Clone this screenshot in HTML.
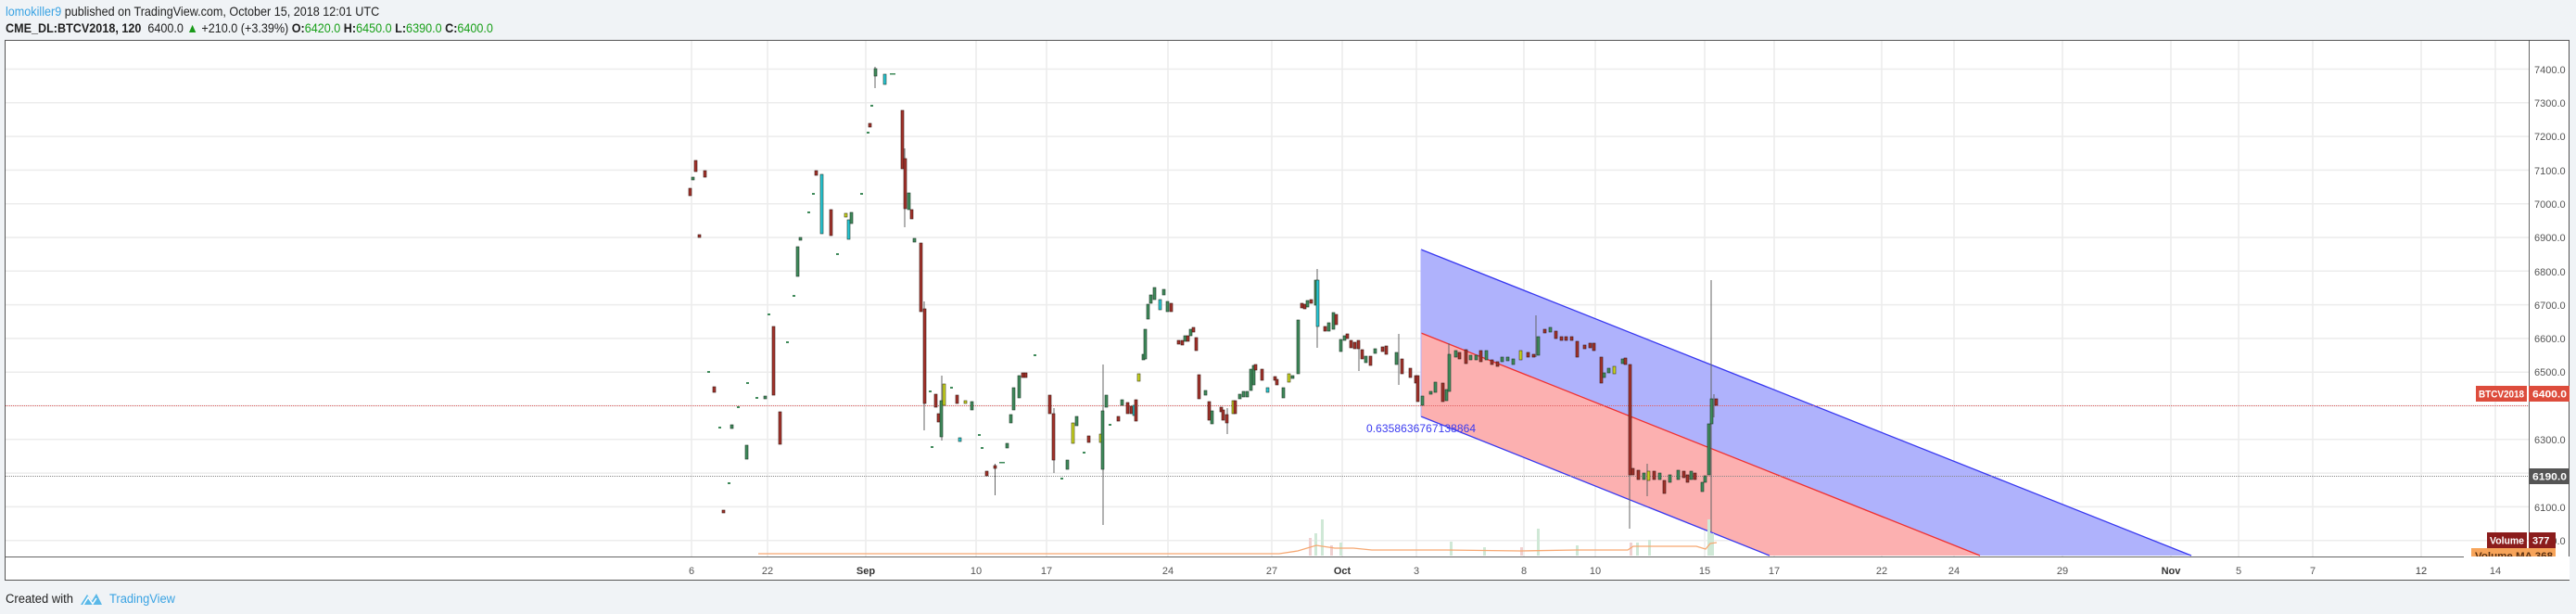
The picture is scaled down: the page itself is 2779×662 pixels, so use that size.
<!DOCTYPE html>
<html><head><meta charset="utf-8"><style>
html,body{margin:0;padding:0;background:#f0f3f6;width:2779px;height:662px;overflow:hidden;font-family:"Liberation Sans",sans-serif}
.h{position:absolute;left:6px;white-space:nowrap;font-size:14px;transform:scaleX(0.9);transform-origin:left center;color:#222}
svg{position:absolute;left:0;top:0}
.r{fill:#a3322a;stroke:#3a1a16;stroke-width:.6}
.g{fill:#3f8a5a;stroke:#1f3a2a;stroke-width:.6}
.c{fill:#27c6d6;stroke:#1f3a2a;stroke-width:.6}
.y{fill:#c9d41f;stroke:#3a3a16;stroke-width:.6}
.ax{font-size:11px;fill:#555}
</style></head><body>
<div class="h" style="top:4px"><span style="color:#3aa3e3">lomokiller9</span> published on TradingView.com, October 15, 2018 12:01 UTC</div>
<div class="h" style="top:22px;font-size:14px"><b>CME_DL:BTCV2018, 120</b>&nbsp; 6400.0 <span style="color:#1a9a1a">▲</span> +210.0 (+3.39%) <b>O:</b><span style="color:#1aa01a">6420.0</span> <b>H:</b><span style="color:#1aa01a">6450.0</span> <b>L:</b><span style="color:#1aa01a">6390.0</span> <b>C:</b><span style="color:#1aa01a">6400.0</span></div>
<svg width="2779" height="662" viewBox="0 0 2779 662">
<rect x="5.5" y="43.5" width="2766" height="582" fill="#fff" stroke="#555" stroke-width="1"/>
<g stroke="#ececec" stroke-width="1.5">
<line x1="6" x2="2728" y1="74.5" y2="74.5"/><line x1="6" x2="2728" y1="110.8" y2="110.8"/><line x1="6" x2="2728" y1="147.1" y2="147.1"/><line x1="6" x2="2728" y1="183.4" y2="183.4"/><line x1="6" x2="2728" y1="219.7" y2="219.7"/><line x1="6" x2="2728" y1="256" y2="256"/><line x1="6" x2="2728" y1="292.3" y2="292.3"/><line x1="6" x2="2728" y1="328.6" y2="328.6"/><line x1="6" x2="2728" y1="364.9" y2="364.9"/><line x1="6" x2="2728" y1="401.2" y2="401.2"/><line x1="6" x2="2728" y1="437.5" y2="437.5"/><line x1="6" x2="2728" y1="473.8" y2="473.8"/><line x1="6" x2="2728" y1="510.1" y2="510.1"/><line x1="6" x2="2728" y1="546.4" y2="546.4"/><line x1="6" x2="2728" y1="582.7" y2="582.7"/>
<g>
<line y1="44" y2="600" x1="746" x2="746"/><line y1="44" y2="600" x1="828" x2="828"/><line y1="44" y2="600" x1="934" x2="934"/><line y1="44" y2="600" x1="1053" x2="1053"/><line y1="44" y2="600" x1="1129" x2="1129"/><line y1="44" y2="600" x1="1260" x2="1260"/><line y1="44" y2="600" x1="1372" x2="1372"/><line y1="44" y2="600" x1="1448" x2="1448"/><line y1="44" y2="600" x1="1528" x2="1528"/><line y1="44" y2="600" x1="1644" x2="1644"/><line y1="44" y2="600" x1="1721" x2="1721"/><line y1="44" y2="600" x1="1839" x2="1839"/><line y1="44" y2="600" x1="1914" x2="1914"/><line y1="44" y2="600" x1="2030" x2="2030"/><line y1="44" y2="600" x1="2108" x2="2108"/><line y1="44" y2="600" x1="2225" x2="2225"/><line y1="44" y2="600" x1="2342" x2="2342"/><line y1="44" y2="600" x1="2415" x2="2415"/><line y1="44" y2="600" x1="2495" x2="2495"/><line y1="44" y2="600" x1="2612" x2="2612"/><line y1="44" y2="600" x1="2692" x2="2692"/>
</g></g>
<polygon points="1533,269 2364,599 2136,599 1533,359" fill="#afb2fc"/>
<polygon points="1533,359 2136,599 1909,599 1533,449" fill="#fcb0b0"/>
<line x1="1533" y1="269" x2="2364" y2="599" stroke="#3838f0" stroke-width="1.3"/>
<line x1="1533" y1="359" x2="2136" y2="599" stroke="#f03030" stroke-width="1.3"/>
<line x1="1533" y1="449" x2="1909" y2="599" stroke="#3838f0" stroke-width="1.3"/>
<line x1="1533" y1="269" x2="1533" y2="449" stroke="#afb2fc" stroke-width="1"/>
<text x="1474" y="466" font-size="12" fill="#3a3af0" textLength="118">0.6358636767138864</text>
<line x1="6" x2="2728" y1="437.5" y2="437.5" stroke="#e06060" stroke-width="1" stroke-dasharray="1,1"/>
<line x1="6" x2="2728" y1="513.5" y2="513.5" stroke="#888" stroke-width="1" stroke-dasharray="1,1"/>
<g fill="#cfe8d6">
<rect x="1418" y="575" width="3" height="24"/><rect x="1425" y="560" width="3" height="39"/><rect x="1445" y="585" width="3" height="14"/><rect x="1658" y="570" width="3" height="29"/><rect x="1765" y="585" width="3" height="14"/><rect x="1778" y="582" width="3" height="17"/><rect x="1842" y="560" width="3" height="39"/><rect x="1845" y="575" width="4" height="24"/><rect x="1564" y="584" width="3" height="15"/><rect x="1700" y="588" width="3" height="11"/><rect x="1600" y="590" width="3" height="9"/>
</g>
<g fill="#efd0d0"><rect x="1412" y="580" width="3" height="19"/><rect x="1758" y="585" width="3" height="14"/><rect x="1435" y="588" width="3" height="11"/><rect x="1640" y="590" width="3" height="9"/></g>
<polyline points="818,597 1380,597 1400,594 1420,588 1440,591 1460,591 1480,593 1560,593 1640,594 1700,593 1756,593 1762,589 1830,589 1840,592 1845,586 1852,585" fill="none" stroke="#f6a872" stroke-width="1.3"/>
<g stroke="#666" stroke-width="1">
<line x1="997" x2="997" y1="325" y2="464"/><line x1="1073.5" x2="1073.5" y1="500" y2="534"/><line x1="1190" x2="1190" y1="393" y2="566"/><line x1="1421" x2="1421" y1="290" y2="375"/><line x1="1137" x2="1137" y1="440" y2="510"/><line x1="1758" x2="1758" y1="393" y2="570"/><line x1="1846" x2="1846" y1="302" y2="573"/><line x1="1509" x2="1509" y1="360" y2="415"/><line x1="1016" x2="1016" y1="405" y2="475"/><line x1="976" x2="976" y1="160" y2="245"/><line x1="944" x2="944" y1="72" y2="95"/><line x1="1324" x2="1324" y1="440" y2="468"/><line x1="1657" x2="1657" y1="340" y2="385"/><line x1="1777" x2="1777" y1="500" y2="535"/><line x1="1849" x2="1849" y1="425" y2="450"/><line x1="1466" x2="1466" y1="370" y2="400"/><line x1="1563" x2="1563" y1="370" y2="420"/></g>
<g>
<rect class="r" x="743" y="203" width="3" height="8"/><rect class="r" x="749" y="173" width="3" height="12"/><rect class="g" x="746" y="191" width="3" height="3"/><rect class="r" x="759" y="184" width="3" height="7"/><rect class="r" x="753" y="253" width="3" height="3"/><rect class="r" x="769" y="417" width="3" height="6"/><rect class="r" x="779" y="550" width="3" height="3"/><rect class="g" x="788" y="458" width="3" height="4"/><rect class="g" x="804" y="480" width="3" height="15"/><rect class="r" x="833" y="352" width="3" height="74"/><rect class="r" x="840" y="444" width="3" height="35"/><rect class="g" x="824" y="427" width="3" height="3"/><rect class="g" x="859" y="266" width="3" height="32"/><rect class="g" x="862" y="256" width="3" height="3"/><rect class="c" x="885" y="188" width="3" height="64"/><rect class="r" x="895" y="226" width="3" height="28"/><rect class="c" x="914" y="237" width="3" height="21"/><rect class="g" x="917" y="229" width="3" height="12"/><rect class="y" x="911" y="230" width="3" height="4"/><rect class="r" x="879" y="184" width="3" height="5"/><rect class="r" x="937" y="133" width="3" height="4"/><rect class="g" x="943" y="74" width="3" height="8"/><rect class="c" x="953" y="80" width="3" height="11"/><rect class="r" x="972" y="119" width="3" height="63"/><rect class="r" x="975" y="171" width="3" height="54"/><rect class="g" x="979" y="208" width="3" height="18"/><rect class="r" x="982" y="226" width="3" height="10"/><rect class="g" x="985" y="257" width="3" height="4"/><rect class="r" x="992" y="262" width="3" height="74"/><rect class="r" x="996" y="333" width="3" height="102"/><rect class="r" x="1008" y="425" width="3" height="14"/><rect class="r" x="1011" y="446" width="3" height="9"/><rect class="g" x="1014" y="432" width="3" height="39"/><rect class="y" x="1017" y="414" width="3" height="23"/><rect class="r" x="1031" y="426" width="3" height="9"/><rect class="y" x="1040" y="432" width="3" height="3"/><rect class="g" x="1047" y="433" width="3" height="9"/><rect class="c" x="1034" y="472" width="3" height="4"/><rect class="r" x="1063" y="508" width="3" height="5"/><rect class="r" x="1072" y="502" width="3" height="3"/><rect class="g" x="1085" y="478" width="3" height="5"/><rect class="g" x="1089" y="447" width="3" height="9"/><rect class="g" x="1092" y="418" width="3" height="24"/><rect class="g" x="1098" y="405" width="3" height="24"/><rect class="r" x="1102" y="402" width="3" height="5"/><rect class="r" x="1105" y="402" width="3" height="5"/><rect class="r" x="1131" y="426" width="3" height="20"/><rect class="r" x="1135" y="446" width="3" height="50"/><rect class="g" x="1150" y="496" width="3" height="10"/><rect class="y" x="1156" y="456" width="3" height="22"/><rect class="g" x="1160" y="449" width="3" height="10"/><rect class="r" x="1173" y="470" width="3" height="7"/><rect class="y" x="1186" y="468" width="3" height="9"/><rect class="g" x="1188" y="443" width="3" height="63"/><rect class="g" x="1192" y="426" width="3" height="13"/><rect class="r" x="1205" y="449" width="3" height="5"/><rect class="g" x="1209" y="431" width="3" height="6"/><rect class="r" x="1215" y="434" width="3" height="12"/><rect class="r" x="1219" y="438" width="3" height="8"/><rect class="c" x="1222" y="437" width="3" height="11"/><rect class="r" x="1224" y="431" width="3" height="23"/><rect class="y" x="1227" y="403" width="3" height="8"/><rect class="g" x="1232" y="382" width="3" height="6"/><rect class="g" x="1234" y="355" width="3" height="32"/><rect class="g" x="1237" y="328" width="3" height="16"/><rect class="g" x="1240" y="318" width="3" height="9"/><rect class="g" x="1244" y="310" width="3" height="13"/><rect class="c" x="1250" y="323" width="3" height="11"/><rect class="g" x="1254" y="312" width="3" height="6"/><rect class="g" x="1258" y="325" width="3" height="11"/><rect class="r" x="1262" y="327" width="3" height="9"/><rect class="r" x="1270" y="367" width="3" height="4"/><rect class="r" x="1274" y="367" width="3" height="5"/><rect class="g" x="1277" y="362" width="3" height="6"/><rect class="r" x="1280" y="362" width="3" height="6"/><rect class="g" x="1283" y="355" width="3" height="7"/><rect class="r" x="1286" y="353" width="3" height="5"/><rect class="r" x="1289" y="364" width="3" height="14"/><rect class="r" x="1292" y="404" width="3" height="26"/><rect class="g" x="1299" y="421" width="3" height="5"/><rect class="r" x="1303" y="433" width="3" height="20"/><rect class="g" x="1306" y="443" width="3" height="14"/><rect class="r" x="1316" y="439" width="3" height="5"/><rect class="r" x="1318" y="442" width="3" height="11"/><rect class="r" x="1322" y="447" width="3" height="9"/><rect class="y" x="1329" y="432" width="3" height="14"/><rect class="r" x="1331" y="432" width="3" height="14"/><rect class="g" x="1336" y="425" width="3" height="5"/><rect class="g" x="1340" y="422" width="3" height="6"/><rect class="g" x="1344" y="422" width="3" height="6"/><rect class="g" x="1348" y="398" width="3" height="23"/><rect class="g" x="1351" y="394" width="3" height="21"/><rect class="r" x="1353" y="393" width="3" height="6"/><rect class="r" x="1360" y="398" width="3" height="12"/><rect class="c" x="1366" y="418" width="3" height="5"/><rect class="r" x="1374" y="406" width="3" height="4"/><rect class="r" x="1376" y="409" width="3" height="6"/><rect class="g" x="1383" y="418" width="3" height="11"/><rect class="y" x="1389" y="403" width="3" height="9"/><rect class="g" x="1393" y="405" width="3" height="3"/><rect class="g" x="1399" y="345" width="3" height="58"/><rect class="r" x="1403" y="327" width="3" height="5"/><rect class="r" x="1406" y="328" width="3" height="5"/><rect class="g" x="1409" y="324" width="3" height="7"/><rect class="r" x="1413" y="323" width="3" height="4"/><rect class="g" x="1418" y="302" width="3" height="27"/><rect class="c" x="1420" y="302" width="3" height="50"/><rect class="r" x="1428" y="352" width="3" height="5"/><rect class="g" x="1432" y="348" width="3" height="9"/><rect class="g" x="1437" y="337" width="3" height="18"/><rect class="r" x="1440" y="339" width="3" height="11"/><rect class="g" x="1445" y="366" width="3" height="13"/><rect class="g" x="1449" y="362" width="3" height="5"/><rect class="r" x="1452" y="360" width="3" height="5"/><rect class="r" x="1456" y="367" width="3" height="8"/><rect class="r" x="1460" y="369" width="3" height="7"/><rect class="r" x="1464" y="367" width="3" height="9"/><rect class="r" x="1468" y="377" width="3" height="10"/><rect class="g" x="1472" y="384" width="3" height="7"/><rect class="r" x="1477" y="384" width="3" height="10"/><rect class="g" x="1482" y="376" width="3" height="5"/><rect class="r" x="1490" y="374" width="3" height="5"/><rect class="r" x="1494" y="373" width="3" height="9"/>
<rect class="g" x="1505" y="380" width="3" height="13"/><rect class="r" x="1511" y="387" width="3" height="16"/><rect class="r" x="1520" y="397" width="3" height="10"/><rect class="r" x="1526" y="405" width="3" height="8"/><rect class="r" x="1528" y="405" width="3" height="28"/><rect class="g" x="1533" y="427" width="3" height="10"/><rect class="g" x="1542" y="422" width="3" height="3"/><rect class="g" x="1547" y="412" width="3" height="11"/><rect class="r" x="1555" y="413" width="3" height="20"/><rect class="g" x="1559" y="420" width="3" height="12"/><rect class="g" x="1562" y="382" width="3" height="40"/><rect class="g" x="1569" y="378" width="3" height="7"/><rect class="r" x="1573" y="380" width="3" height="7"/><rect class="r" x="1580" y="377" width="3" height="15"/><rect class="g" x="1585" y="383" width="3" height="5"/><rect class="g" x="1591" y="383" width="3" height="5"/><rect class="r" x="1596" y="378" width="3" height="12"/><rect class="g" x="1602" y="378" width="3" height="10"/><rect class="r" x="1608" y="388" width="3" height="5"/><rect class="r" x="1614" y="390" width="3" height="5"/><rect class="g" x="1619" y="385" width="3" height="5"/><rect class="g" x="1625" y="385" width="3" height="4"/><rect class="g" x="1631" y="387" width="3" height="6"/><rect class="y" x="1639" y="378" width="3" height="10"/><rect class="r" x="1647" y="380" width="3" height="5"/><rect class="r" x="1653" y="382" width="3" height="3"/><rect class="g" x="1658" y="363" width="3" height="20"/><rect class="r" x="1665" y="355" width="3" height="4"/><rect class="g" x="1671" y="353" width="3" height="5"/><rect class="r" x="1677" y="357" width="3" height="8"/><rect class="r" x="1683" y="363" width="3" height="4"/><rect class="r" x="1688" y="363" width="3" height="4"/><rect class="r" x="1694" y="363" width="3" height="4"/><rect class="r" x="1700" y="368" width="3" height="17"/><rect class="r" x="1708" y="372" width="3" height="4"/><rect class="r" x="1714" y="370" width="3" height="5"/><rect class="r" x="1718" y="370" width="3" height="8"/><rect class="r" x="1726" y="385" width="3" height="28"/><rect class="g" x="1729" y="402" width="3" height="5"/><rect class="g" x="1734" y="397" width="3" height="5"/><rect class="y" x="1740" y="395" width="3" height="8"/><rect class="g" x="1749" y="387" width="3" height="5"/><rect class="r" x="1752" y="386" width="3" height="7"/><rect class="r" x="1757" y="393" width="3" height="119"/><rect class="r" x="1760" y="505" width="3" height="7"/><rect class="r" x="1766" y="507" width="3" height="10"/><rect class="g" x="1772" y="510" width="3" height="7"/><rect class="y" x="1777" y="508" width="3" height="10"/><rect class="r" x="1783" y="508" width="3" height="9"/><rect class="g" x="1789" y="510" width="3" height="7"/><rect class="r" x="1794" y="518" width="3" height="14"/><rect class="g" x="1800" y="512" width="3" height="8"/><rect class="g" x="1809" y="507" width="3" height="10"/><rect class="r" x="1815" y="508" width="3" height="7"/><rect class="r" x="1819" y="512" width="3" height="8"/><rect class="g" x="1823" y="508" width="3" height="9"/><rect class="r" x="1827" y="510" width="3" height="7"/><rect class="g" x="1835" y="520" width="3" height="10"/><rect class="g" x="1838" y="513" width="3" height="7"/><rect class="g" x="1842" y="457" width="3" height="55"/><rect class="g" x="1845" y="430" width="3" height="27"/><rect class="r" x="1850" y="430" width="3" height="7"/>
</g>
<g fill="#3f8a5a"><rect x="763" y="400" width="3" height="2"/><rect x="775" y="460" width="3" height="2"/><rect x="785" y="520" width="3" height="2"/><rect x="795" y="438" width="3" height="2"/><rect x="805" y="412" width="3" height="2"/><rect x="815" y="428" width="3" height="2"/><rect x="828" y="338" width="3" height="2"/><rect x="848" y="368" width="3" height="2"/><rect x="855" y="318" width="3" height="2"/><rect x="871" y="228" width="3" height="2"/><rect x="876" y="208" width="3" height="2"/><rect x="902" y="273" width="3" height="2"/><rect x="928" y="208" width="3" height="2"/><rect x="935" y="142" width="3" height="2"/><rect x="939" y="113" width="3" height="2"/><rect x="960" y="79" width="6" height="1.5"/><rect x="1002" y="421" width="3" height="2"/><rect x="1004" y="481" width="3" height="2"/><rect x="1025" y="417" width="3" height="2"/><rect x="1055" y="468" width="3" height="2"/><rect x="1058" y="482" width="3" height="2"/><rect x="1078" y="498" width="6" height="1.5"/><rect x="1115" y="382" width="3" height="2"/><rect x="1144" y="515" width="3" height="2"/><rect x="1168" y="487" width="3" height="2"/><rect x="1196" y="457" width="3" height="2"/></g>
<line x1="2728.5" y1="44" x2="2728.5" y2="600" stroke="#666"/>
<line x1="6" y1="600.5" x2="2728" y2="600.5" stroke="#666"/>
<g class="ax">
<text x="2734" y="79">7400.0</text><text x="2734" y="115">7300.0</text><text x="2734" y="151">7200.0</text><text x="2734" y="188">7100.0</text><text x="2734" y="224">7000.0</text><text x="2734" y="260">6900.0</text><text x="2734" y="297">6800.0</text><text x="2734" y="333">6700.0</text><text x="2734" y="369">6600.0</text><text x="2734" y="405">6500.0</text><text x="2734" y="478">6300.0</text><text x="2734" y="551">6100.0</text><text x="2734" y="587">6000.0</text>
</g>
<g class="ax" text-anchor="middle">
<text x="746" y="619">6</text><text x="828" y="619">22</text><text x="934" y="619" font-weight="bold" fill="#333">Sep</text><text x="1053" y="619">10</text><text x="1129" y="619">17</text><text x="1260" y="619">24</text><text x="1372" y="619">27</text><text x="1448" y="619" font-weight="bold" fill="#333">Oct</text><text x="1528" y="619">3</text><text x="1644" y="619">8</text><text x="1721" y="619">10</text><text x="1839" y="619">15</text><text x="1914" y="619">17</text><text x="2030" y="619">22</text><text x="2108" y="619">24</text><text x="2225" y="619">29</text><text x="2342" y="619" font-weight="bold" fill="#333">Nov</text><text x="2415" y="619">5</text><text x="2495" y="619">7</text><text x="2612" y="619">12</text><text x="2692" y="619">14</text>
</g>
<rect x="2671" y="416" width="55" height="17" fill="#dd4c3c"/><text x="2674" y="428.5" font-size="11" font-weight="bold" fill="#fff" textLength="49" lengthAdjust="spacingAndGlyphs">BTCV2018</text>
<rect x="2728" y="416" width="44" height="17" fill="#dd4c3c"/><text x="2732" y="428.5" font-size="11" font-weight="bold" fill="#fff" textLength="37" lengthAdjust="spacingAndGlyphs">6400.0</text>
<rect x="2728" y="505" width="44" height="17" fill="#555"/><text x="2732" y="517.5" font-size="11" font-weight="bold" fill="#fff" textLength="37" lengthAdjust="spacingAndGlyphs">6190.0</text>
<rect x="2666" y="591" width="91" height="9" fill="#f7a45a"/>
<text x="2670" y="603" font-size="11" font-weight="bold" fill="#5a3010" textLength="84" lengthAdjust="spacingAndGlyphs">Volume MA  368</text>
<rect x="2683" y="574" width="43" height="17" fill="#8b1c1c"/><text x="2686" y="586.5" font-size="11" font-weight="bold" fill="#fff" textLength="37" lengthAdjust="spacingAndGlyphs">Volume</text>
<rect x="2728" y="574" width="29" height="17" fill="#8b1c1c"/><text x="2732" y="586.5" font-size="11" font-weight="bold" fill="#fff">377</text>
<rect x="2658" y="600" width="114" height="25" fill="#fff"/>
<text x="2612" y="619" class="ax" text-anchor="middle">12</text><text x="2692" y="619" class="ax" text-anchor="middle">14</text>
<text x="6" y="650" font-size="13.5" fill="#222" textLength="73" lengthAdjust="spacingAndGlyphs">Created with</text>
<path d="M87 652 L94 641 L99 648 L104 640 L110 652 Z" fill="#5ab8e8"/>
<path d="M90 652 L95 644 L100 651 L104 645" fill="none" stroke="#fff" stroke-width="1.5"/>
<text x="118" y="650" font-size="13.5" fill="#3aa3e3" textLength="71" lengthAdjust="spacingAndGlyphs">TradingView</text>
</svg>
</body></html>
